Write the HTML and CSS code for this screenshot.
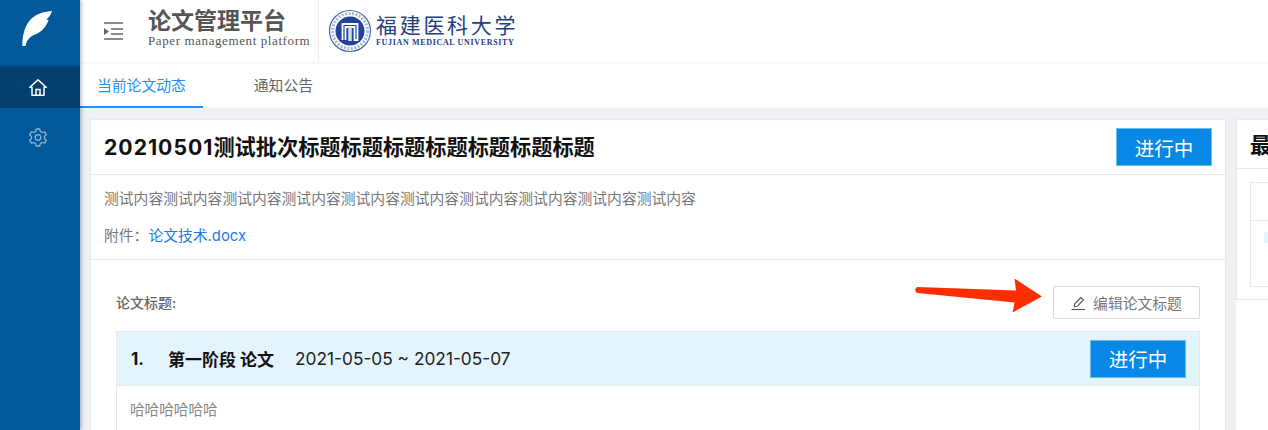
FILE: index.html
```html
<!DOCTYPE html>
<html lang="en">
	<head>
		<meta charset="UTF-8" />
		<meta name="viewport" content="width=device-width, initial-scale=1.0" />
		<title>论文管理平台</title>
		<link rel="stylesheet" href="styles.css">
	</head>
	<body>
		<aside class="sidebar">
			<div class="brand">
				<svg width="30" height="35" viewBox="0 0 30 35"><path fill="#fff" d="M30 0C29 3 27.500 5.500 25.500 7.500L24 8.500L26.500 9C25.500 12 24 14.500 22.500 16.500C20 20 16 22.500 12 24C8 25.500 5 28.500 3.500 35H0.500C0 31 0.500 26 2 21C3.500 15.500 6 10.500 10 7C15.500 2.500 22.500 0.500 30 0Z"/></svg>
			</div>
			<a class="nav-item nav-item-active">
				<svg width="18" height="17" viewBox="0 0 18 17" fill="none" stroke="#fff" stroke-width="1.500"><path d="M0.800 8.200L9 0.900L17.200 8.200H15V16.200H3V8.200Z" stroke-linejoin="round"/><path d="M7 16V10.500H11V16"/></svg>
			</a>
			<a class="nav-item nav-item-gear">
				<svg width="18" height="19" viewBox="0 0 18 19" fill="none" stroke="#8db4d2" stroke-width="1.300" stroke-linejoin="round"><path d="M7.300 1H10.700L11.300 3.400L13.200 4.500L15.600 3.800L17.300 6.700L15.500 8.400V10.600L17.300 12.300L15.600 15.200L13.200 14.500L11.300 15.600L10.700 18H7.300L6.700 15.600L4.800 14.500L2.400 15.200L0.700 12.300L2.500 10.600V8.400L0.700 6.700L2.400 3.800L4.800 4.500L6.700 3.400Z"/><circle cx="9" cy="9.500" r="2.800"/></svg>
			</a>
		</aside>
		<div class="main">
			<header class="topbar">
				<svg class="toggle" width="19" height="18" viewBox="0 0 19 18" fill="none" stroke="#666" stroke-width="1.700"><path d="M0 1H19M7 7H19M7 12H19M0 17H19"/><path d="M0 6L5 9.500L0 13Z" fill="#666" stroke="none"/></svg>
				<div class="platform">
					<div class="platform-name">论文管理平台</div>
					<div class="platform-en">Paper management platform</div>
				</div>
				<div class="school">
					<svg width="44" height="44" viewBox="0 0 44 44" fill="none"><circle cx="22" cy="22" r="20.500" stroke="#4a66a3" stroke-width="1.200"/><circle cx="22" cy="22" r="17.500" stroke="#a9b7d6" stroke-width="3" stroke-dasharray="2 1.500"/><circle cx="22" cy="22" r="14.500" fill="#23439a"/><path d="M14.500 31V15H29.500V31H26.500V18H17.500V31" stroke="#fff" stroke-width="1.800"/><path d="M22 18V32" stroke="#cfe0f2" stroke-width="3.500"/></svg>
					<div class="school-text">
						<div class="school-name">福建医科大学</div>
						<div class="school-en">FUJIAN MEDICAL UNIVERSITY</div>
					</div>
				</div>
			</header>
			<nav class="tabs">
				<a class="tab tab-active">当前论文动态</a>
				<a class="tab">通知公告</a>
			</nav>
			<div class="content">
				<div class="left">
					<section class="card">
						<div class="card-head">
							<h2><span class="batch-no">20210501</span>测试批次标题标题标题标题标题标题标题</h2>
							<span class="status">进行中</span>
						</div>
						<div class="card-body">
							<p class="desc">测试内容测试内容测试内容测试内容测试内容测试内容测试内容测试内容测试内容测试内容</p>
							<p class="attach">附件：<a>论文技术.docx</a></p>
						</div>
					</section>
					<section class="paper">
						<div class="paper-head">
							<span class="paper-label">论文标题:</span>
							<button class="edit-btn">
								<svg width="15" height="14" viewBox="0 0 15 14" fill="none" stroke="#555" stroke-width="1.100"><path d="M0.500 13.500H14"/><path d="M3.200 10.800L3.700 7.800L9.800 1.500L12.400 4L6.200 10.300Z" stroke-linejoin="round"/></svg>
								编辑论文标题
							</button>
							<svg class="arrow" width="128" height="36" viewBox="0 0 128 36"><path fill="#ff2e00" d="M2.500 9L101 12.500L99.500 0.500L127 18.500L97.500 34.500L99.500 24.500L2.500 15C-0.500 14 -0.500 10 2.500 9Z"/></svg>
						</div>
						<div class="stage">
							<div class="stage-head">
								<span class="stage-no">1.</span>
								<span class="stage-name">第一阶段 论文</span>
								<span class="stage-date">2021-05-05 ~ 2021-05-07</span>
								<span class="status">进行中</span>
							</div>
							<div class="stage-body">哈哈哈哈哈哈</div>
						</div>
					</section>
				</div>
				<div class="right">
					<section class="side-card">
						<div class="side-head">最</div>
						<div class="side-table">
							<div class="side-row"></div>
							<div class="side-row side-row-data"><span class="side-cell"></span></div>
						</div>
					</section>
				</div>
			</div>
		</div>
	</body>
</html>
```

FILE: styles.css
```css
* {
	box-sizing: border-box;
}
body {
	height: 430px;
	margin: 0;
	display: flex;
	overflow: hidden;
	font-family: Inter, "Noto Sans CJK SC", sans-serif;
	color: #666;
	background-color: #fff;
}
p,
h2 {
	margin: 0;
}
.sidebar {
	flex: 0 0 80px;
	background-color: #01589a;
	box-shadow: 1px 0 4px rgba(0, 21, 41, 0.35);
	position: relative;
	z-index: 2;
}
.brand {
	height: 66px;
	padding: 11px 0 0 22px;
}
.nav-item {
	height: 42px;
	padding-right: 5px;
	display: flex;
	justify-content: center;
	align-items: center;
}
.nav-item-active {
	background-color: #03406f;
}
.nav-item-gear {
	margin-top: 8px;
}
.main {
	flex: 1;
	min-width: 0;
	display: flex;
	flex-direction: column;
}
.topbar {
	height: 62px;
	flex-shrink: 0;
	display: flex;
	align-items: center;
	padding-left: 24px;
	background-color: #fff;
	box-shadow: 0 1px 3px rgba(0, 0, 0, 0.06);
	position: relative;
}
.toggle {
	margin-right: 25px;
}
.platform {
	width: 171px;
	height: 100%;
	padding-top: 9px;
	border-right: 1px solid #eee;
}
.platform-name {
	font-size: 23px;
	line-height: 24px;
	font-weight: 700;
	color: #555;
}
.platform-en {
	font-family: "Liberation Serif", serif;
	font-size: 13px;
	line-height: 15px;
	letter-spacing: 0.6px;
	white-space: nowrap;
	color: #555;
}
.school {
	display: flex;
	align-items: center;
	gap: 4px;
	padding-left: 9px;
}
.school-name {
	font-size: 21px;
	line-height: 24px;
	letter-spacing: 2.700px;
	color: #24407f;
}
.school-en {
	font-family: "Liberation Serif", serif;
	font-size: 8px;
	line-height: 10px;
	font-weight: 700;
	letter-spacing: 0.67px;
	white-space: nowrap;
	color: #24407f;
}
.tabs {
	height: 46px;
	flex-shrink: 0;
	display: flex;
	background-color: #fff;
}
.tab {
	padding: 0 17px;
	margin-right: 34px;
	font-size: 14.800px;
	line-height: 48px;
	color: #666;
}
.tab-active {
	color: #1e90ff;
	border-bottom: 2px solid #1e90ff;
}
.content {
	flex: 1;
	min-height: 0;
	display: flex;
	gap: 10px;
	padding: 11px 0 0 10px;
	background-color: #eff1f5;
}
.left {
	flex: 0 0 1136px;
	display: flex;
	flex-direction: column;
}
.card {
	height: 141px;
	flex-shrink: 0;
	background-color: #fff;
	border: 1px solid #e8e8e8;
	border-radius: 2px;
}
.card-head {
	height: 55px;
	display: flex;
	justify-content: space-between;
	align-items: center;
	padding: 0 13px;
	border-bottom: 1px solid #e8e8e8;
}
.card-head h2 {
	padding-bottom: 4px;
	font-size: 21.200px;
	font-weight: 700;
	color: #111;
}
.batch-no {
	letter-spacing: 1px;
}
.status {
	width: 96px;
	height: 38px;
	display: flex;
	justify-content: center;
	align-items: center;
	font-size: 19.500px;
	color: #fff;
	background-color: #0787e6;
	border: 1px solid #6cbcf0;
}
.card-body {
	padding: 13px 13px 0;
	font-size: 14.800px;
	line-height: 22px;
	color: #777;
}
.attach {
	margin-top: 15px;
}
.attach a {
	color: #1a7be0;
}
.paper {
	flex: 1 0 auto;
	padding: 26px 25px 0;
	background-color: #fff;
	border-left: 1px solid #eee;
	border-right: 1px solid #e8e8e8;
}
.paper-head {
	height: 45px;
	display: flex;
	justify-content: space-between;
	align-items: flex-start;
	position: relative;
}
.paper-label {
	font-size: 14px;
	line-height: 33px;
	font-weight: 500;
}
.edit-btn {
	width: 147px;
	height: 33px;
	display: flex;
	justify-content: center;
	align-items: center;
	gap: 7px;
	font-family: inherit;
	font-size: 14.800px;
	color: #777;
	background-color: #fff;
	border: 1px solid #d9d9d9;
	border-radius: 2px;
}
.arrow {
	position: absolute;
	left: 799px;
	top: -8px;
}
.stage {
	border: 1px solid #e8e8e8;
}
.stage-head {
	height: 54px;
	display: flex;
	align-items: center;
	padding: 0 13px 0 14px;
	background-color: #e3f4fd;
	border-bottom: 1px solid #e8e8e8;
}
.stage-no {
	width: 37px;
	font-size: 17px;
	font-weight: 700;
	color: #111;
}
.stage-name {
	margin-right: 21px;
	font-size: 17px;
	font-weight: 700;
	color: #111;
}
.stage-date {
	flex: 1;
	font-size: 17.300px;
	color: #222;
}
.stage-body {
	padding: 13px;
	font-size: 14.600px;
	line-height: 22px;
	color: #888;
}
.right {
	flex: 1;
	min-width: 0;
	background-color: #fff;
}
.side-card {
	height: 181px;
	background-color: #fff;
	border: 1px solid #e8e8e8;
	border-right: none;
	overflow: hidden;
}
.side-head {
	height: 49px;
	padding-left: 13px;
	font-size: 21.200px;
	line-height: 50px;
	font-weight: 700;
	color: #111;
	border-bottom: 1px solid #e8e8e8;
}
.side-table {
	height: 105px;
	margin: 13px 0 0 13px;
	border: 1px solid #e8e8e8;
	border-right: none;
}
.side-row {
	height: 38px;
	border-bottom: 1px solid #e8e8e8;
}
.side-row-data {
	padding: 11px 0 0 13px;
	border-bottom: none;
}
.side-cell {
	display: block;
	width: 10px;
	height: 11px;
	background-color: #e3f4fd;
}
```
